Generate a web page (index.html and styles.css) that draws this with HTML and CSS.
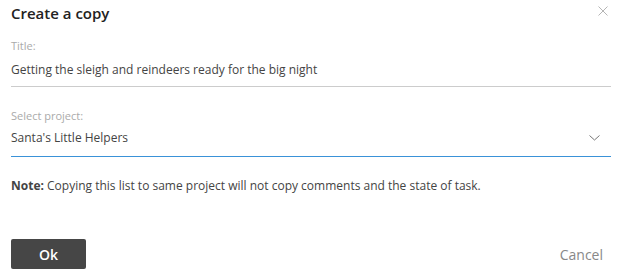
FILE: index.html
```html
<!DOCTYPE html>
<html lang="en">
<head>
    <meta charset="UTF-8">
    <title>Create a copy</title>
    <link rel="stylesheet" href="styles.css">
</head>
<body>
    <div class="dialog">
        <div class="dialog-header">
            <h2>Create a copy</h2>
            <button class="close-btn" aria-label="Close">
                <svg width="10" height="10" viewBox="0 0 10 10"><path d="M0.5 0.5 L9.5 9.5 M9.5 0.5 L0.5 9.5" stroke="#b5b5b5" stroke-width="1" fill="none"/></svg>
            </button>
        </div>
        <div class="field">
            <label>Title:</label>
            <div class="field-value">Getting the sleigh and reindeers ready for the big night</div>
        </div>
        <div class="field field-select">
            <label>Select project:</label>
            <div class="field-value">
                <span>Santa's Little Helpers</span>
                <svg class="chevron" width="11" height="6" viewBox="0 0 11 6"><path d="M0.5 0.5 L5.5 5 L10.5 0.5" stroke="#777" stroke-width="1" fill="none"/></svg>
            </div>
        </div>
        <p class="note"><strong>Note:</strong> Copying this list to same project will not copy comments and the state of task.</p>
        <div class="actions">
            <button class="btn-ok">Ok</button>
            <button class="btn-cancel">Cancel</button>
        </div>
    </div>
</body>
</html>
```

FILE: styles.css
```css
body {
    margin: 0;
    background-color: #fff;
    font-family: 'Open Sans', Arial, sans-serif;
    color: #333;
}
.dialog {
    padding: 0 11px;
}
.dialog-header {
    display: flex;
    align-items: center;
    justify-content: space-between;
    height: 26px;
}
.dialog-header h2 {
    margin: 0;
    font-size: 15px;
    font-weight: 600;
    color: #222;
}
.close-btn {
    align-self: flex-start;
    border: none;
    background: none;
    padding: 0;
    margin: 6px 3px 0 0;
    display: flex;
}
.field {
    margin-top: 12px;
}
.field label {
    display: block;
    font-size: 11px;
    color: #aaa;
    line-height: 16px;
}
.field-value {
    display: flex;
    align-items: center;
    justify-content: space-between;
    font-size: 12px;
    line-height: 18px;
    padding: 7px 0;
    border-bottom: 1px solid #ccc;
    color: #444;
}
.field-select {
    margin-top: 21px;
}
.field-select .field-value {
    padding: 5px 0 9px;
    border-bottom-color: #3a92d8;
}
.chevron {
    margin-right: 11px;
}
.note {
    margin: 20px 0 0;
    font-size: 12px;
    color: #444;
}
.note strong {
    font-weight: 700;
}
.actions {
    display: flex;
    align-items: center;
    justify-content: space-between;
    margin-top: 45px;
}
.btn-ok {
    width: 75px;
    height: 30px;
    border: none;
    border-radius: 2px;
    background-color: #464646;
    color: #fff;
    font-family: inherit;
    font-size: 14px;
    font-weight: 600;
}
.btn-cancel {
    border: none;
    background: none;
    padding: 0;
    margin-right: 8px;
    color: #888;
    font-family: inherit;
    font-size: 14px;
}
```
